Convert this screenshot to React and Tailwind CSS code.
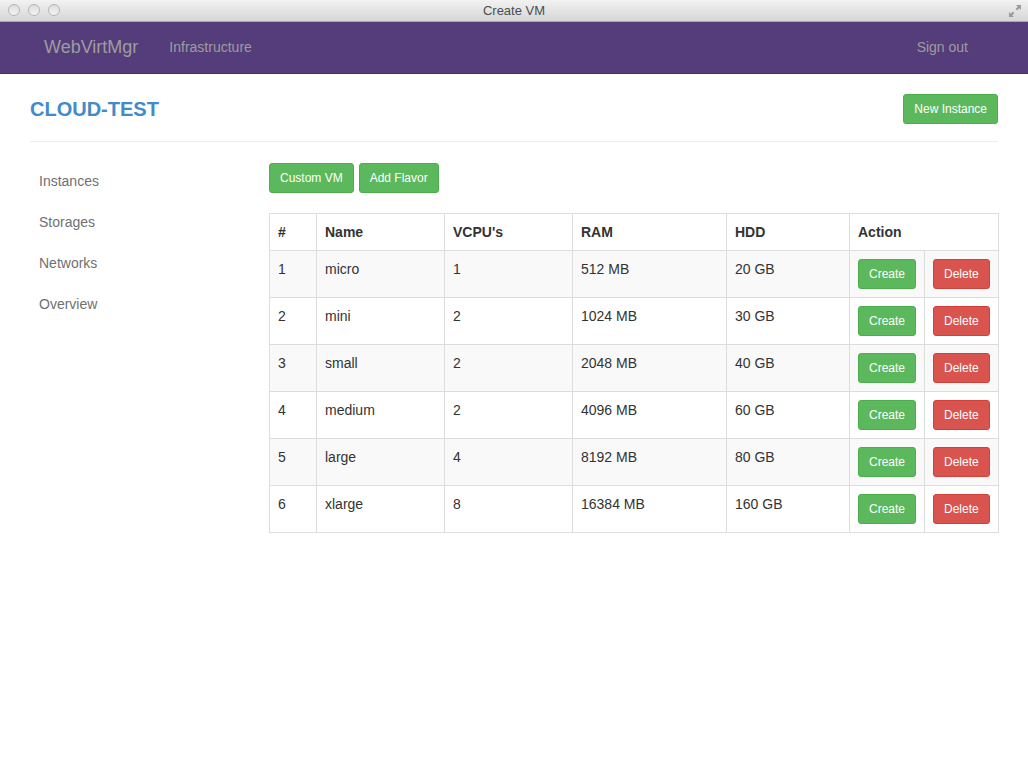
import React from 'react';

const flavors = [
    { id: 1, name: 'micro', vcpu: 1, ram: '512 MB', hdd: '20 GB' },
    { id: 2, name: 'mini', vcpu: 2, ram: '1024 MB', hdd: '30 GB' },
    { id: 3, name: 'small', vcpu: 2, ram: '2048 MB', hdd: '40 GB' },
    { id: 4, name: 'medium', vcpu: 2, ram: '4096 MB', hdd: '60 GB' },
    { id: 5, name: 'large', vcpu: 4, ram: '8192 MB', hdd: '80 GB' },
    { id: 6, name: 'xlarge', vcpu: 8, ram: '16384 MB', hdd: '160 GB' },
];

const sideLinks = ['Instances', 'Storages', 'Networks', 'Overview'];

function Btn({ children, red }) {
    return (
        <button
            className={`h-[30px] px-[10px] rounded-[3px] border text-[12px] leading-none text-white ${red ? 'bg-[#d9534f] border-[#d43f3a]' : 'bg-[#5cb85c] border-[#4cae4c]'}`}
        >
            {children}
        </button>
    );
}

export default function App() {
    return (
        <div className="w-[1028px] h-[780px] bg-white text-[14px] text-[#333] font-['Liberation_Sans',Arial,sans-serif] overflow-hidden">
            {/* window title bar */}
            <div className="relative h-[22px] bg-gradient-to-b from-[#f2f2f2] to-[#d6d6d6] border-b border-[#a8a8a8] flex items-center justify-center">
                <div className="absolute left-[8px] top-[4px] flex gap-[8px]">
                    <span className="w-[12px] h-[12px] rounded-full border border-[#b5b5b5] bg-gradient-to-b from-[#dcdcdc] to-[#f4f4f4]"></span>
                    <span className="w-[12px] h-[12px] rounded-full border border-[#b5b5b5] bg-gradient-to-b from-[#dcdcdc] to-[#f4f4f4]"></span>
                    <span className="w-[12px] h-[12px] rounded-full border border-[#b5b5b5] bg-gradient-to-b from-[#dcdcdc] to-[#f4f4f4]"></span>
                </div>
                <span className="text-[13px] text-[#4d4d4d] font-['Liberation_Sans',sans-serif]">Create VM</span>
                <svg className="absolute right-[6px] top-[4px]" width="14" height="14" viewBox="0 0 14 14">
                    <path d="M8 1h5v5l-1.8-1.8-2.2 2.2-1.4-1.4 2.2-2.2z" fill="#9a9a9a" />
                    <path d="M6 13H1V8l1.8 1.8 2.2-2.2 1.4 1.4-2.2 2.2z" fill="#9a9a9a" />
                </svg>
            </div>

            {/* navbar */}
            <div className="h-[52px] bg-[#553c7b] border-b border-[#46306a] flex items-center">
                <div className="w-[1028px] flex items-center pl-[44px] pr-[60px]">
                    <span className="text-[18px] text-[#9d9d9d]">WebVirtMgr</span>
                    <span className="ml-[31px] text-[14px] text-[#9d9d9d]">Infrastructure</span>
                    <span className="ml-auto text-[14px] text-[#9d9d9d]">Sign out</span>
                </div>
            </div>

            {/* page */}
            <div className="px-[30px]">
                <div className="flex items-center justify-between pt-[20px] pb-[17px] border-b border-[#eeeeee]">
                    <h1 className="text-[20px] font-bold text-[#428bca] leading-[30px]">CLOUD-TEST</h1>
                    <Btn>New Instance</Btn>
                </div>

                <div className="flex mt-[21px]">
                    <div className="w-[239px] -mt-[2px]">
                        {sideLinks.map((link) => (
                            <div key={link} className="px-[9px] py-[10px] leading-[21px] text-[14px] text-[#707070]">
                                {link}
                            </div>
                        ))}
                    </div>
                    <div className="w-[729px]">
                        <div className="flex gap-[5px]">
                            <Btn>Custom VM</Btn>
                            <Btn>Add Flavor</Btn>
                        </div>
                        <table className="mt-[20px] w-[729px] border-collapse border border-[#dddddd] table-fixed">
                            <colgroup>
                                <col className="w-[47px]" />
                                <col className="w-[128px]" />
                                <col className="w-[128px]" />
                                <col className="w-[154px]" />
                                <col className="w-[123px]" />
                                <col className="w-[75px]" />
                                <col className="w-[74px]" />
                            </colgroup>
                            <thead>
                                <tr>
                                    <th className="border border-[#dddddd] p-[8px] text-left font-bold leading-[20px]">#</th>
                                    <th className="border border-[#dddddd] p-[8px] text-left font-bold leading-[20px]">Name</th>
                                    <th className="border border-[#dddddd] p-[8px] text-left font-bold leading-[20px]">VCPU's</th>
                                    <th className="border border-[#dddddd] p-[8px] text-left font-bold leading-[20px]">RAM</th>
                                    <th className="border border-[#dddddd] p-[8px] text-left font-bold leading-[20px]">HDD</th>
                                    <th colSpan={2} className="border border-[#dddddd] p-[8px] text-left font-bold leading-[20px]">Action</th>
                                </tr>
                            </thead>
                            <tbody>
                                {flavors.map((f, i) => (
                                    <tr key={f.id} className={i % 2 === 0 ? 'bg-[#f9f9f9]' : 'bg-white'}>
                                        <td className="border border-[#dddddd] p-[8px] align-top leading-[20px]">{f.id}</td>
                                        <td className="border border-[#dddddd] p-[8px] align-top leading-[20px]">{f.name}</td>
                                        <td className="border border-[#dddddd] p-[8px] align-top leading-[20px]">{f.vcpu}</td>
                                        <td className="border border-[#dddddd] p-[8px] align-top leading-[20px]">{f.ram}</td>
                                        <td className="border border-[#dddddd] p-[8px] align-top leading-[20px]">{f.hdd}</td>
                                        <td className="border border-[#dddddd] p-[8px] align-top">
                                            <div className="flex"><Btn>Create</Btn></div>
                                        </td>
                                        <td className="border border-[#dddddd] py-[8px] pl-[8px] align-top">
                                            <div className="flex"><Btn red>Delete</Btn></div>
                                        </td>
                                    </tr>
                                ))}
                            </tbody>
                        </table>
                    </div>
                </div>
            </div>
        </div>
    );
}
